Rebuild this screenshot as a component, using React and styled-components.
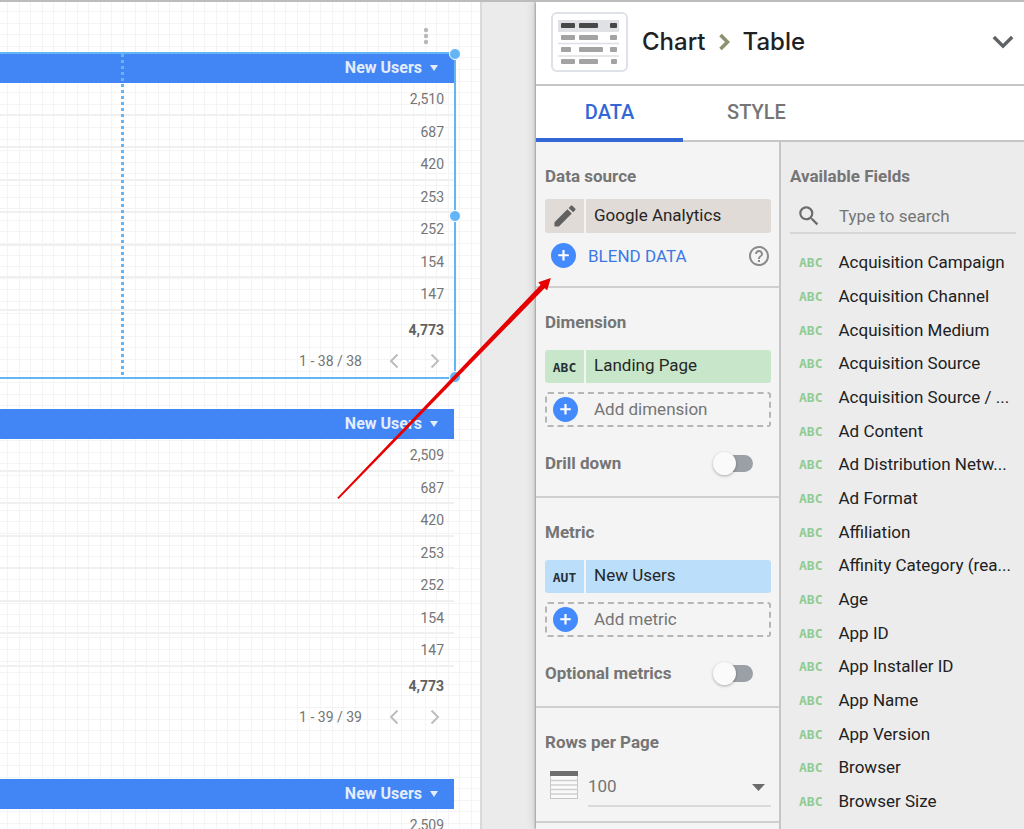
import React, { useState } from 'react';
import styled, { createGlobalStyle, css } from 'styled-components';

const GlobalStyle = createGlobalStyle`
  * {
    box-sizing: border-box;
  }

  body {
    margin: 0;
    overflow: hidden;
    font-family: Roboto, 'Liberation Sans', sans-serif;
  }

  button, input, select {
    font-family: inherit;
    color: inherit;
  }

  button {
    padding: 0;
    border: 0;
    background: none;
    cursor: pointer;
  }
`;

const charts = [
    { id: 1, selected: true, rows: ['2,510', '687', '420', '253', '252', '154', '147'], total: '4,773', range: '1 - 38 / 38' },
    { id: 2, rows: ['2,509', '687', '420', '253', '252', '154', '147'], total: '4,773', range: '1 - 39 / 39' },
    { id: 3, rows: ['2,509'] },
];

const fields = [
    'Acquisition Campaign',
    'Acquisition Channel',
    'Acquisition Medium',
    'Acquisition Source',
    'Acquisition Source / ...',
    'Ad Content',
    'Ad Distribution Netw...',
    'Ad Format',
    'Affiliation',
    'Affinity Category (rea...',
    'Age',
    'App ID',
    'App Installer ID',
    'App Name',
    'App Version',
    'Browser',
    'Browser Size',
    'Browser Version',
];

const PlusIcon = () => (
    <svg width="25" height="25" viewBox="0 0 25 25" aria-hidden="true">
        <circle cx="12.5" cy="12.5" r="12.5" fill="#448aff" />
        <path d="M12.5 7v10.500M7.250 12.250h10.500" stroke="#fff" strokeWidth="2.2" />
    </svg>
);

const PencilIcon = () => (
    <svg width="28" height="28" viewBox="0 0 24 24" fill="#616161" aria-hidden="true">
        <path d="M3 17.25V21h3.75L17.81 9.94l-3.75-3.75L3 17.25zM20.71 7.04a1 1 0 0 0 0-1.41l-2.34-2.34a1 1 0 0 0-1.41 0l-1.83 1.83 3.75 3.75 1.83-1.83z" />
    </svg>
);

const HelpIcon = () => (
    <svg width="24" height="24" viewBox="0 0 24 24" fill="#8a8a8a" aria-hidden="true">
        <path d="M11 18h2v-2h-2v2zm1-16C6.48 2 2 6.48 2 12s4.48 10 10 10 10-4.48 10-10S17.52 2 12 2zm0 18c-4.41 0-8-3.59-8-8s3.59-8 8-8 8 3.59 8 8-3.59 8-8 8zm0-14c-2.21 0-4 1.79-4 4h2c0-1.1.9-2 2-2s2 .9 2 2c0 2-3 1.75-3 5h2c0-2.25 3-2.5 3-5 0-2.21-1.79-4-4-4z" />
    </svg>
);

const SearchIcon = () => (
    <svg width="26" height="26" viewBox="0 0 24 24" fill="#6b6b6b" aria-hidden="true">
        <path d="M15.5 14h-.79l-.28-.27A6.47 6.47 0 0 0 16 9.5 6.5 6.5 0 1 0 9.5 16c1.61 0 3.09-.59 4.23-1.57l.27.28v.79l5 4.99L20.49 19l-4.99-5zm-6 0C7.01 14 5 11.99 5 9.5S7.01 5 9.5 5 14 7.01 14 9.5 11.99 14 9.5 14z" />
    </svg>
);

const MoreIcon = () => (
    <svg width="6" height="18" viewBox="0 0 6 18" fill="#b8b8b8" aria-hidden="true">
        <circle cx="3" cy="3" r="2.2" />
        <circle cx="3" cy="9" r="2.2" />
        <circle cx="3" cy="15" r="2.2" />
    </svg>
);

const Caret = ({ width, height, fill }) => (
    <svg width={width} height={height} viewBox="0 0 10 6" preserveAspectRatio="none" aria-hidden="true">
        <path d="M0 0h10L5 6z" fill={fill} />
    </svg>
);

const PageArrow = ({ next }) => (
    <svg width="10" height="16" viewBox="0 0 10 16" fill="none" stroke="#bdbdbd" strokeWidth="2" aria-hidden="true">
        <path d={next ? 'M1.5 1.5L8 8l-6.5 6.5' : 'M8.5 1.5L2 8l6.5 6.5'} />
    </svg>
);

const TableThumb = () => (
    <svg width="77" height="60" viewBox="0 0 77 60" aria-hidden="true">
        <rect x="1" y="1" width="75" height="58" rx="5" fill="#fff" stroke="#dfe1e8" strokeWidth="2" />
        <rect x="7" y="8" width="61" height="12" fill="#dfe1e5" />
        <g fill="#484848">
            <rect x="10" y="11" width="14" height="5" rx="1" />
            <rect x="28" y="11" width="19" height="5" rx="1" />
            <rect x="59" y="11" width="7" height="5" rx="1" />
        </g>
        <g fill="#a3a3a3">
            <rect x="10" y="23" width="14" height="5" rx="1" />
            <rect x="28" y="23" width="19" height="5" rx="1" />
            <rect x="59" y="23" width="7" height="5" rx="1" />
            <rect x="10" y="35" width="10" height="5" rx="1" />
            <rect x="28" y="35" width="24" height="5" rx="1" />
            <rect x="59" y="35" width="7" height="5" rx="1" />
            <rect x="10" y="47" width="14" height="5" rx="1" />
            <rect x="28" y="47" width="19" height="5" rx="1" />
            <rect x="60" y="47" width="6" height="5" rx="1" />
        </g>
        <path d="M7 31.5h61M7 44h61" stroke="#dfe0e5" strokeWidth="1.6" />
    </svg>
);

const RowsIcon = () => (
    <svg width="28" height="28" viewBox="0 0 28 28" aria-hidden="true">
        <rect x="0.5" y="0.5" width="27" height="27" fill="#fafafa" stroke="#c8c8c8" />
        <path d="M1 9.5h26M1 14h26M1 18.5h26M1 23h26" stroke="#cfcfcf" strokeWidth="1.5" />
        <rect width="28" height="5" fill="#6e6e6e" />
    </svg>
);

const Chart = ({ chart }) => (
    <ChartFrame>
        <DataTable>
            <thead>
                <tr>
                    <HeadCell scope="col">
                        <SortButton>
                            New Users
                            <Caret width="8" height="6" fill="#e3edfd" />
                        </SortButton>
                    </HeadCell>
                </tr>
            </thead>
            <tbody>
                {chart.rows.map((value, index) => (
                    <BodyRow key={index}><Cell>{value}</Cell></BodyRow>
                ))}
            </tbody>
            {chart.total && (
                <tfoot>
                    <TotalRow><Cell $total>{chart.total}</Cell></TotalRow>
                </tfoot>
            )}
        </DataTable>
        {chart.range && (
            <Pager>
                <PagerRange>{chart.range}</PagerRange>
                <PagerButton aria-label="Previous page"><PageArrow /></PagerButton>
                <PagerButton aria-label="Next page"><PageArrow next /></PagerButton>
            </Pager>
        )}
        {chart.selected && (
            <Selection>
                <ColumnGuide />
                <Handle $top="0%" />
                <Handle $top="50%" />
                <Handle $top="100%" />
            </Selection>
        )}
    </ChartFrame>
);

const FieldSection = ({ title, type, name, color, addLabel, toggleLabel, toggleId }) => {
    const [on, setOn] = useState(false);
    return (
        <Section>
            <SectionTitle>{title}</SectionTitle>
            <Chip $color={color} $spaced>
                <ChipType><TypeBadge>{type}</TypeBadge></ChipType>
                <ChipName>{name}</ChipName>
            </Chip>
            <AddButton>
                <PlusIcon />
                {addLabel}
            </AddButton>
            <ToggleRow>
                <ToggleLabel htmlFor={toggleId}>{toggleLabel}</ToggleLabel>
                <Toggle id={toggleId} type="checkbox" checked={on} onChange={() => setOn(!on)} />
            </ToggleRow>
        </Section>
    );
};

const App = () => {
    const [tab, setTab] = useState('DATA');
    const [search, setSearch] = useState('');

    return (
        <Page>
            <GlobalStyle />
            <Canvas>
                <CanvasMenu aria-label="Chart options"><MoreIcon /></CanvasMenu>
                {charts.map((chart) => <Chart key={chart.id} chart={chart} />)}
            </Canvas>
            <Panel>
                <PanelHeader>
                    <TableThumb />
                    <PanelTitle>
                        Chart
                        <svg width="11" height="18" viewBox="0 0 11 18" fill="none" stroke="#8a9270" strokeWidth="3.6" aria-hidden="true">
                            <path d="M1.5 2l7 7-7 7" />
                        </svg>
                        Table
                    </PanelTitle>
                    <CollapseButton aria-label="Change chart type">
                        <svg width="22" height="14" viewBox="0 0 22 14" fill="none" stroke="#5f6368" strokeWidth="3.4" aria-hidden="true">
                            <path d="M1.8 2l9.2 9.2L20.2 2" />
                        </svg>
                    </CollapseButton>
                </PanelHeader>
                <Tabs role="tablist">
                    {['DATA', 'STYLE'].map((name) => (
                        <Tab key={name} role="tab" aria-selected={tab === name} $active={tab === name} onClick={() => setTab(name)}>
                            {name}
                        </Tab>
                    ))}
                </Tabs>
                <PanelBody>
                    <Setup>
                        <Section>
                            <SectionTitle>Data source</SectionTitle>
                            <Chip $color="#e0dbd7">
                                <ChipType aria-label="Edit data source"><PencilIcon /></ChipType>
                                <ChipName>Google Analytics</ChipName>
                            </Chip>
                            <BlendRow>
                                <BlendButton>
                                    <PlusIcon />
                                    BLEND DATA
                                </BlendButton>
                                <HelpButton aria-label="Help"><HelpIcon /></HelpButton>
                            </BlendRow>
                        </Section>
                        <FieldSection
                            title="Dimension"
                            type="ABC"
                            name="Landing Page"
                            color="#c8e6c9"
                            addLabel="Add dimension"
                            toggleLabel="Drill down"
                            toggleId="drill-down"
                        />
                        <FieldSection
                            title="Metric"
                            type="AUT"
                            name="New Users"
                            color="#bbdefb"
                            addLabel="Add metric"
                            toggleLabel="Optional metrics"
                            toggleId="optional-metrics"
                        />
                        <Section>
                            <SectionTitle as="label" htmlFor="rows-per-page">Rows per Page</SectionTitle>
                            <RowsRow>
                                <RowsIcon />
                                <SelectBox>
                                    <RowsSelect id="rows-per-page" defaultValue="100">
                                        <option>100</option>
                                    </RowsSelect>
                                    <Caret width="13" height="7" fill="#6b6b6b" />
                                </SelectBox>
                            </RowsRow>
                        </Section>
                    </Setup>
                    <Fields>
                        <SectionTitle as="label" htmlFor="field-search">Available Fields</SectionTitle>
                        <SearchBox>
                            <SearchIcon />
                            <SearchInput
                                id="field-search"
                                placeholder="Type to search"
                                value={search}
                                onChange={(e) => setSearch(e.target.value)}
                            />
                        </SearchBox>
                        <FieldList>
                            {fields
                                .filter((field) => field.toLowerCase().includes(search.toLowerCase()))
                                .map((field) => (
                                    <FieldItem key={field}>
                                        <TypeBadge $muted>ABC</TypeBadge>
                                        {field}
                                    </FieldItem>
                                ))}
                        </FieldList>
                    </Fields>
                </PanelBody>
            </Panel>
            <Pointer width="216" height="224" viewBox="0 0 216 224" aria-hidden="true">
                <path d="M0.300 220.700L203.500 8l-2.200-2.700L213.800 1l-3.600 12.300-2.700-2L1.700 222z" fill="#e60000" />
            </Pointer>
        </Page>
    );
};

export default App;

const Page = styled.div`
    position: relative;
    display: grid;
    grid-template-columns: minmax(0, 1fr) 488px;
    column-gap: 54px;
    height: 100vh;
    overflow: hidden;
    border-top: 2px solid #bcbcbc;
    background: #ebebeb;
`;

/* 58px tile with five grid lines in each direction */
const gridLines = '#f4f4f4 0 1px, transparent 1px 12px, #f4f4f4 12px 13px, transparent 13px 23px, #f4f4f4 23px 24px, transparent 24px 35px, #f4f4f4 35px 36px, transparent 36px 46px, #f4f4f4 46px 47px, transparent 47px 58px';

const Canvas = styled.main`
    display: flex;
    flex-direction: column;
    padding: 25px 26px 0 0;
    border-right: 2px solid #d9d9d9;
    overflow: hidden;
    background-color: #fff;
    background-image: linear-gradient(to right, ${gridLines}), linear-gradient(${gridLines});
    background-size: 58px 58px;
    background-position: 7px 9px;
`;

const CanvasMenu = styled.button`
    align-self: flex-end;
    height: 20px;
    margin: 0 25px 6px 0;
`;

const ChartFrame = styled.section`
    position: relative;
    flex-shrink: 0;

    & + & {
        margin-top: 31px;
    }

    & + & + & {
        margin-top: 45px;
    }
`;

const DataTable = styled.table`
    width: 100%;
    border-spacing: 0;
    color: #757575;
    font-size: 14px;
    text-align: right;
`;

const HeadCell = styled.th`
    height: 30px;
    padding: 0 16px 0 0;
    background: #4285f4;
    text-align: right;
`;

const SortButton = styled.button`
    display: inline-flex;
    align-items: center;
    gap: 8px;
    color: #e3edfd;
    font-size: 16px;
    font-weight: 700;
    line-height: 20px;
    vertical-align: middle;
`;

const BodyRow = styled.tr`
    height: 33px;

    &:nth-child(even) {
        height: 32px;
    }

    td {
        border-bottom: 2px solid #f0f0f0;
    }
`;

const TotalRow = styled.tr`
    height: 35px;
`;

const Cell = styled.td`
    padding: 1px 10px 0 0;
    ${props => props.$total && css`
        padding-top: 2px;
        color: #616161;
        font-weight: 700;
    `}
`;

const Pager = styled.div`
    display: flex;
    align-items: center;
    justify-content: flex-end;
    height: 29px;
    margin-bottom: 3px;
    padding-right: 14px;
    color: #757575;
    font-size: 14px;
`;

const PagerRange = styled.span`
    margin-right: 27px;
`;

const PagerButton = styled.button`
    display: flex;

    & + & {
        margin-left: 31px;
    }
`;

const Selection = styled.div`
    position: absolute;
    inset: -1px -2px -1px 0;
    border: 2px solid #64b5f6;
    border-left: 0;
    pointer-events: none;
`;

const ColumnGuide = styled.div`
    position: absolute;
    top: 0;
    bottom: 0;
    left: 27%;
    width: 3px;
    margin-left: -2px;
    background: repeating-linear-gradient(#64b5f6 0 3px, transparent 3px 6px);
`;

const Handle = styled.span`
    position: absolute;
    top: ${props => props.$top};
    right: -1px;
    width: 12px;
    height: 12px;
    border: 1px solid #fff;
    border-radius: 50%;
    background: #64b5f6;
    transform: translate(50%, -50%);
`;

const Panel = styled.aside`
    display: flex;
    flex-direction: column;
    min-height: 0;
    background: #fff;
    box-shadow: -1px 0 2px rgba(0, 0, 0, 0.3), -4px 0 8px rgba(0, 0, 0, 0.08);
`;

const PanelHeader = styled.header`
    display: flex;
    flex-shrink: 0;
    align-items: center;
    height: 84px;
    padding: 0 10px 2px 15px;
    border-bottom: 2px solid #c6c6c6;
`;

const PanelTitle = styled.h1`
    display: flex;
    flex: 1;
    align-items: center;
    gap: 13px;
    margin: 0 0 0 14px;
    color: #202124;
    font-family: Inter, 'Open Sans', sans-serif;
    font-size: 24px;
    font-weight: 500;
    line-height: 32px;
`;

const CollapseButton = styled.button`
    display: flex;
`;

const Tabs = styled.nav`
    display: flex;
    flex-shrink: 0;
    height: 56px;
    border-bottom: 2px solid #c6c6c6;
`;

const Tab = styled.button`
    width: 147px;
    height: 56px;
    border-bottom: 4px solid ${props => props.$active ? '#3367d6' : 'transparent'};
    color: ${props => props.$active ? '#3367d6' : '#757575'};
    font-size: 20px;
    font-weight: 500;
    line-height: 24px;
`;

const PanelBody = styled.div`
    display: grid;
    flex: 1;
    grid-template-columns: 245px minmax(0, 1fr);
    min-height: 0;
    overflow: hidden;
`;

const Setup = styled.div`
    border-right: 2px solid #c6c6c6;
    background: #f4f4f4;
`;

const Section = styled.section`
    display: flex;
    flex-direction: column;
    padding: 24px 8px 0 9px;

    & + & {
        border-top: 2px solid #cfcfcf;
    }

    &:last-child {
        border-bottom: 2px solid #cfcfcf;
    }
`;

const SectionTitle = styled.h2`
    display: block;
    margin: 0;
    color: #757575;
    font-size: 17px;
    font-weight: 700;
    line-height: 20px;
`;

const Chip = styled.div`
    display: flex;
    gap: 2px;
    height: ${props => props.$spaced ? '33px' : '34px'};
    margin-top: ${props => props.$spaced ? '18px' : '13px'};
    overflow: hidden;
    border-radius: 3px;

    > button {
        background: ${props => props.$color};
    }
`;

const ChipType = styled.button`
    display: flex;
    align-items: center;
    justify-content: center;
    width: 39px;
`;

const ChipName = styled.button`
    flex: 1;
    padding: 0 0 3px 8px;
    color: #262626;
    font-size: 17px;
    text-align: left;
`;

const TypeBadge = styled.span`
    padding-top: 2px;
    color: ${props => props.$muted ? '#8fcb93' : '#263238'};
    font-family: 'DejaVu Sans Mono', monospace;
    font-size: 13px;
    font-weight: 700;
    line-height: 16px;
`;

const BlendRow = styled.div`
    display: flex;
    align-items: center;
    justify-content: space-between;
    height: 45px;
    margin-bottom: 8px;
    padding-left: 6px;
`;

const BlendButton = styled.button`
    display: flex;
    align-items: center;
    gap: 12px;
    color: #3b78e7;
    font-size: 17px;
`;

const HelpButton = styled.button`
    display: flex;
`;

const AddButton = styled.button`
    display: flex;
    align-items: center;
    gap: 16px;
    height: 35px;
    margin-top: 9px;
    padding: 0 0 1px 6px;
    border: 2px dashed #b6b6b6;
    border-radius: 3px;
    color: #757575;
    font-size: 17px;
`;

const ToggleRow = styled.div`
    display: flex;
    align-items: center;
    justify-content: space-between;
    height: 24px;
    margin: 24px 18px 21px 0;
`;

const ToggleLabel = styled.label`
    color: #757575;
    font-size: 17px;
    font-weight: 700;
`;

const Toggle = styled.input`
    position: relative;
    width: 37px;
    height: 17px;
    margin: 0;
    border-radius: 9px;
    background: #9aa0a6;
    appearance: none;

    &::before {
        content: '';
        position: absolute;
        top: -3px;
        left: ${props => props.checked ? '18px' : '-3px'};
        width: 23px;
        height: 23px;
        border-radius: 50%;
        background: #fafafa;
        box-shadow: 0 1px 3px rgba(0, 0, 0, 0.3);
    }
`;

const RowsRow = styled.div`
    display: flex;
    align-items: center;
    gap: 10px;
    height: 45px;
    margin: 10px 0 14px;
    padding-left: 5px;
`;

const SelectBox = styled.div`
    position: relative;
    flex: 1;
    height: 45px;
    border-bottom: 2px solid #dadada;

    svg {
        position: absolute;
        top: 22px;
        right: 6px;
        pointer-events: none;
    }
`;

const RowsSelect = styled.select`
    width: 100%;
    height: 43px;
    padding: 4px 0 0;
    border: 0;
    background: none;
    color: #757575;
    font-size: 17px;
    appearance: none;
`;

const Fields = styled.div`
    padding: 24px 8px 0 9px;
    overflow: hidden;
    background: #ececec;
`;

const SearchBox = styled.div`
    display: flex;
    align-items: center;
    gap: 17px;
    height: 35px;
    margin-top: 13px;
    padding-left: 6px;
    border-bottom: 2px solid #d6d6d6;
`;

const SearchInput = styled.input`
    flex: 1;
    min-width: 0;
    padding: 0;
    border: 0;
    outline: 0;
    background: none;
    font-size: 17px;

    &::placeholder {
        color: #757575;
        opacity: 1;
    }
`;

const FieldList = styled.ul`
    margin: 11px 0 0;
    padding: 0 0 0 9px;
    list-style: none;
`;

const FieldItem = styled.li`
    display: flex;
    align-items: center;
    gap: 16px;
    height: 34px;
    color: #212121;
    font-size: 17px;
    white-space: nowrap;

    &:nth-child(3n) {
        height: 33px;
    }
`;

/* Red callout arrow over the canvas and the blend button */
const Pointer = styled.svg`
    position: absolute;
    top: 275px;
    right: 471px;
    pointer-events: none;
`;
